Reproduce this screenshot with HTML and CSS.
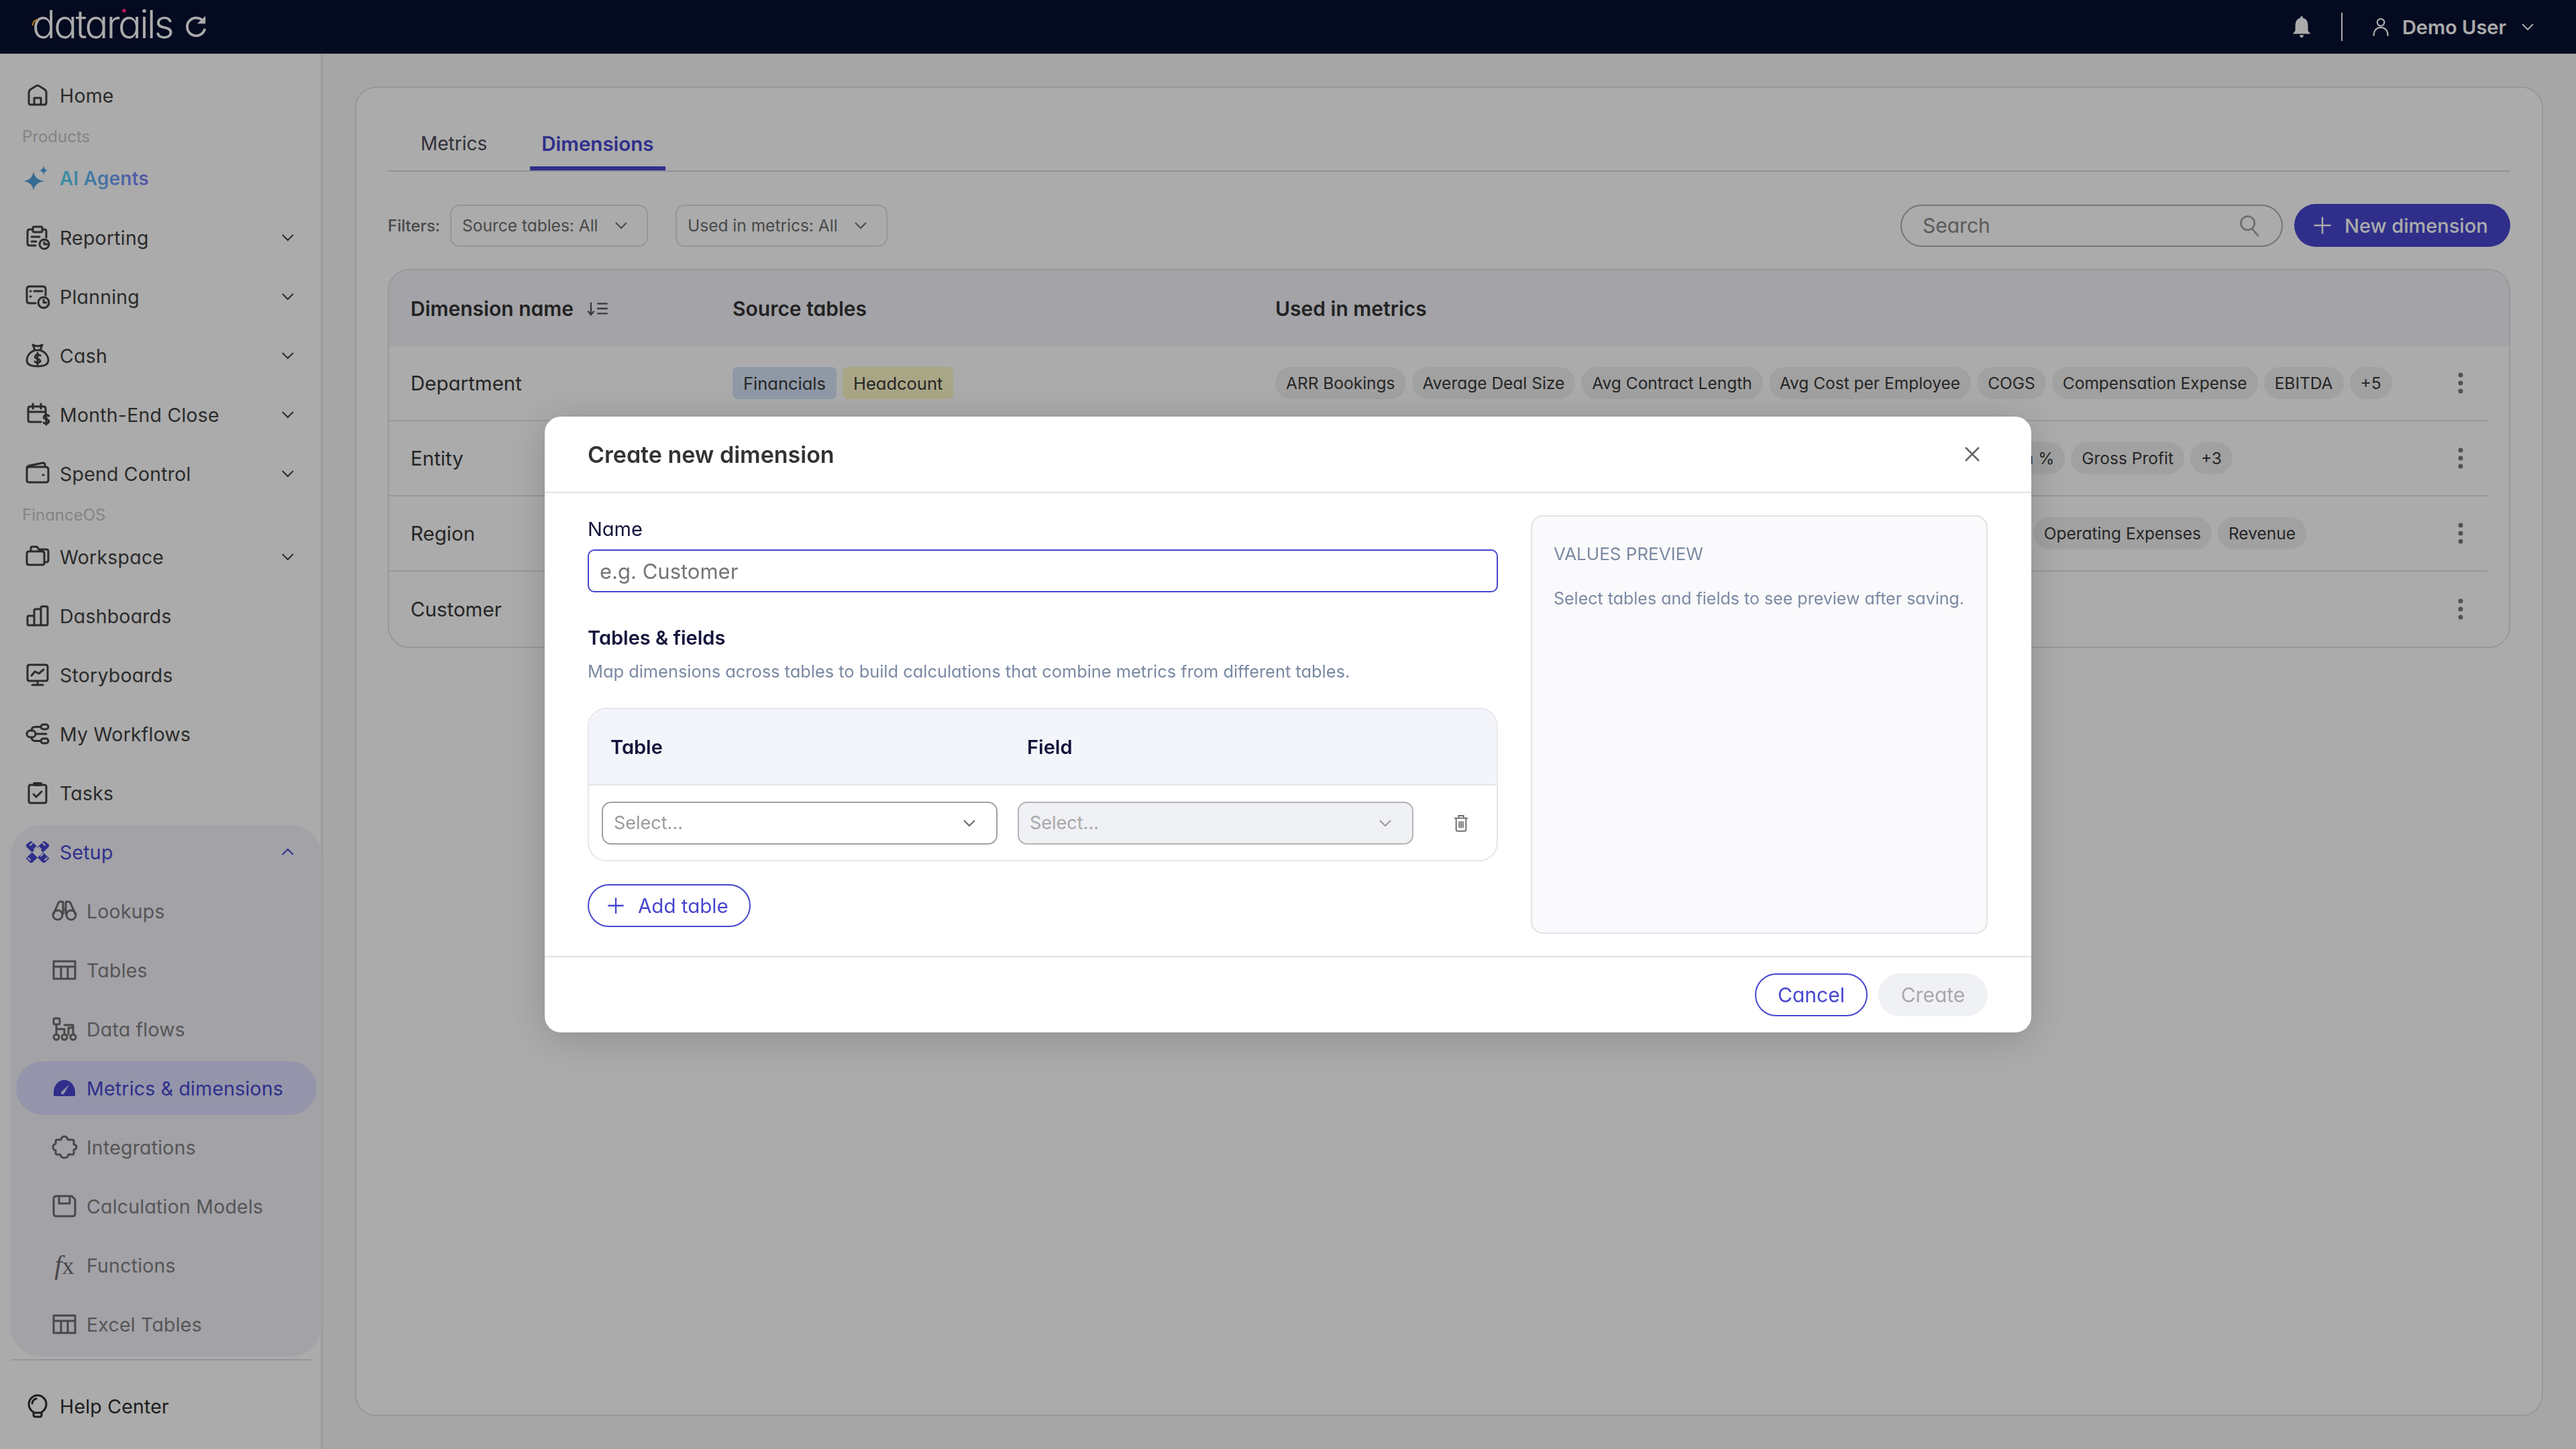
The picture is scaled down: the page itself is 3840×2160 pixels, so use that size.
FILE: index.html
```html
<!DOCTYPE html>
<html>
    <head>

        <title>Metrics &amp; dimensions</title>

        <link rel="stylesheet" href="styles.css">

    </head>
    <body>

        <svg class="sprite" xmlns="http://www.w3.org/2000/svg">
            <symbol id="i-chevron" viewBox="0 0 24 24"><path d="M4 8l8 8 8-8"/></symbol>
            <symbol id="i-plus" viewBox="0 0 24 24"><path d="M12 2v20M2 12h20"/></symbol>
            <symbol id="i-home" viewBox="0 0 40 40"><path d="M7 16Q7 13 10 11L18 6Q20 5 22 6L30 11Q33 13 33 16V31Q33 34 30 34H10Q7 34 7 31ZM15 34V24H25V34"/></symbol>
            <symbol id="i-reporting" viewBox="0 0 40 40"><path d="M13 8H8Q5 8 5 11V29Q5 32 8 32H17M27 8H30Q33 8 33 11V20M13 6Q13 4 15 4H25Q27 4 27 6V10Q27 12 25 12H15Q13 12 13 10ZM11 19H23M11 26H18"/><circle cx="30" cy="30" r="7"/><path d="M30 27V30H34"/></symbol>
            <symbol id="i-planning" viewBox="0 0 40 40"><path d="M17 30H8Q4 30 4 26V9Q4 5 8 5H28Q32 5 32 9V18M9 12H10M15 12H27M9 20H10"/><circle cx="29" cy="29" r="8"/><path d="M29 25V29H33"/></symbol>
            <symbol id="i-cash" viewBox="0 0 40 40"><path d="M13 4Q20 8 27 4L24 12H16ZM16 12C8 15 4 21 4 27C4 33 9 36 20 36S36 33 36 27C36 21 32 15 24 12M24 20Q20 17 17 20T20 25T23 30Q19 32 16 29M20 16V34"/></symbol>
            <symbol id="i-calendar" viewBox="0 0 40 40"><path d="M25 31H9Q6 31 6 28V11Q6 8 9 8H29Q32 8 32 11V19M6 16H32M13 4V11M25 4V11M37 22Q33 19 30 22T33 27T36 32Q32 35 29 32M33 19V35"/></symbol>
            <symbol id="i-wallet" viewBox="0 0 40 40"><path d="M4 12Q4 9 8 8L28 4Q31 4 31 7V10M4 14Q4 10 8 10H32Q36 10 36 14V30Q36 33 32 33H8Q4 33 4 30ZM28 22H29"/></symbol>
            <symbol id="i-folder" viewBox="0 0 40 40"><path d="M10 10V7Q10 5 12 5H19L22 9H33Q36 9 36 12V25Q36 28 33 28H31M4 15Q4 12 7 12H27Q30 12 30 15V29Q30 32 27 32H7Q4 32 4 29Z"/></symbol>
            <symbol id="i-bars" viewBox="0 0 40 40"><path d="M5 22Q5 20 7 20H15V34H7Q5 34 5 32ZM15 12Q15 10 17 10H25V34H15ZM25 8Q25 6 27 6H33Q35 6 35 8V32Q35 34 33 34H25Z"/></symbol>
            <symbol id="i-monitor" viewBox="0 0 40 40"><path d="M5 8Q5 5 8 5H32Q35 5 35 8V26Q35 29 32 29H8Q5 29 5 26ZM20 29V35M12 35H28M11 21L16 15L22 18L29 12"/></symbol>
            <symbol id="i-workflow" viewBox="0 0 40 40"><rect x="25" y="6" width="11" height="7" rx="3.5"/><rect x="25" y="27" width="11" height="7" rx="3.5"/><rect x="4" y="15" width="13" height="10" rx="5"/><path d="M25 9.500H17Q11 9.500 11 15M25 30.500H17Q11 30.500 11 25M17 20H33"/></symbol>
            <symbol id="i-tasks" viewBox="0 0 40 40"><path d="M13 8H10Q7 8 7 11V32Q7 35 10 35H30Q33 35 33 32V11Q33 8 30 8H27M14 22L18 26L26 18"/><rect x="13" y="4" width="14" height="6" rx="2" class="solid"/></symbol>
            <symbol id="i-setup" viewBox="0 0 40 40"><path class="solid" d="M3 9L8 5Q10 3 12 5L36 28Q38 30 36 31L32 35Q30 37 28 36L6 15Q2 12 3 9ZM37 9L32 5Q30 3 28 5L4 28Q2 30 4 31L8 35Q10 37 12 36L34 15Q38 12 37 9Z"/><path class="cut" d="M9 10L12 7M15 16L18 13M25 26L28 23M31 32L34 29M31 10L28 7M9 32L6 29M25 16L22 13"/></symbol>
            <symbol id="i-binoculars" viewBox="0 0 40 40"><circle cx="10" cy="26" r="7"/><circle cx="30" cy="26" r="7"/><path d="M4 24L11 8Q12 6 14 6H16Q18 6 18 8V24M36 24L29 8Q28 6 26 6H24Q22 6 22 8V24M18 18H22"/></symbol>
            <symbol id="i-table" viewBox="0 0 40 40"><path d="M4 7H36V33H4ZM4 15H36M15 15V33M25 15V33"/></symbol>
            <symbol id="i-dataflow" viewBox="0 0 40 40"><rect x="4" y="4" width="9" height="9" rx="2"/><circle cx="8" cy="32" r="4"/><circle cx="20" cy="32" r="4"/><circle cx="33" cy="32" r="4"/><path d="M8 13V28M8 20H20V28M20 14H33V18H26V28M33 18V28"/></symbol>
            <symbol id="i-gauge" viewBox="0 0 40 40"><path class="solid" fill-rule="evenodd" d="M4 32V26C4 16 11 8 20 8S36 16 36 26V32H4ZM15 26L27 15L19 29Q17 30 15 28Z"/></symbol>
            <symbol id="i-puzzle" viewBox="0 0 40 40"><path d="M15 9Q16 4 20 4T25 9H32Q34 9 34 11V16Q38 17 38 20T34 24V29Q34 31 32 31H26Q25 36 20 36T14 31H9Q7 31 7 29V25Q3 24 3 20T7 15V11Q7 9 9 9Z"/></symbol>
            <symbol id="i-save" viewBox="0 0 40 40"><path d="M4 9Q4 5 8 5H31L36 10V31Q36 35 32 35H8Q4 35 4 31ZM12 5V16H28V5"/></symbol>
            <symbol id="i-bulb" viewBox="0 0 40 40"><path d="M14 29C9 26 7 21 7 17C7 10 13 4 20 4S33 10 33 17C33 21 31 26 26 29V33Q26 36 23 36H17Q14 36 14 33ZM14 30H26M12 16Q13 10 18 9"/></symbol>
            <symbol id="i-user" viewBox="0 0 40 40"><circle cx="20" cy="11" r="7"/><path d="M6 37C6 27 12 21 20 21S34 27 34 37"/></symbol>
            <symbol id="i-search" viewBox="0 0 40 40"><circle cx="16" cy="16" r="12"/><path d="M24 26L34 38"/></symbol>
        </svg>

        <!-- Top bar -->
        <header class="topbar">
            <div class="logo">
                <span class="logo-text">datarails</span>
                <svg class="logo-arc" viewBox="0 0 20 20"><path d="M2 16Q3 5 13 3"/></svg>
                <span class="logo-dot"></span>
            </div>
            <svg class="refresh" viewBox="0 0 40 40"><path d="M33 14A14 14 0 1 0 34 23"/><path class="solid" d="M22 15H35V3Z"/></svg>

            <div class="topbar-right">
                <svg class="bell" viewBox="0 0 28 36"><path d="M14 1Q16 1 16 4Q24 6 24 15V24L28 29H0L4 24V15Q4 6 12 4Q12 1 14 1ZM11 31H17Q17 35 14 35T11 31Z"/></svg>
                <span class="topbar-sep"></span>
                <svg class="icon user-icon"><use href="#i-user"/></svg>
                <span class="user-name">Demo User</span>
                <svg class="chevron"><use href="#i-chevron"/></svg>
            </div>
        </header>

        <div class="layout">

            <!-- Sidebar -->
            <nav class="sidebar">
                <a class="nav-item"><svg class="icon"><use href="#i-home"/></svg>Home</a>
                <div class="nav-label">Products</div>
                <a class="nav-item ai">
                    <svg class="icon" viewBox="0 0 40 40"><path class="ai-star" d="M14 10Q16 22 30 24Q16 26 14 38Q12 26 0 24Q12 22 14 10ZM29 1Q30 7 35 8Q30 9 29 15Q28 9 23 8Q28 7 29 1Z"/></svg>
                    <span class="ai-text">AI Agents</span>
                </a>
                <a class="nav-item"><svg class="icon"><use href="#i-reporting"/></svg>Reporting<svg class="chevron"><use href="#i-chevron"/></svg></a>
                <a class="nav-item"><svg class="icon"><use href="#i-planning"/></svg>Planning<svg class="chevron"><use href="#i-chevron"/></svg></a>
                <a class="nav-item"><svg class="icon"><use href="#i-cash"/></svg>Cash<svg class="chevron"><use href="#i-chevron"/></svg></a>
                <a class="nav-item"><svg class="icon"><use href="#i-calendar"/></svg>Month-End Close<svg class="chevron"><use href="#i-chevron"/></svg></a>
                <a class="nav-item"><svg class="icon"><use href="#i-wallet"/></svg>Spend Control<svg class="chevron"><use href="#i-chevron"/></svg></a>
                <div class="nav-label">FinanceOS</div>
                <a class="nav-item"><svg class="icon"><use href="#i-folder"/></svg>Workspace<svg class="chevron"><use href="#i-chevron"/></svg></a>
                <a class="nav-item"><svg class="icon"><use href="#i-bars"/></svg>Dashboards</a>
                <a class="nav-item"><svg class="icon"><use href="#i-monitor"/></svg>Storyboards</a>
                <a class="nav-item"><svg class="icon"><use href="#i-workflow"/></svg>My Workflows</a>
                <a class="nav-item"><svg class="icon"><use href="#i-tasks"/></svg>Tasks</a>

                <div class="nav-group">
                    <a class="nav-item open"><svg class="icon"><use href="#i-setup"/></svg>Setup<svg class="chevron up"><use href="#i-chevron"/></svg></a>
                    <a class="nav-item sub"><svg class="icon"><use href="#i-binoculars"/></svg>Lookups</a>
                    <a class="nav-item sub"><svg class="icon"><use href="#i-table"/></svg>Tables</a>
                    <a class="nav-item sub"><svg class="icon"><use href="#i-dataflow"/></svg>Data flows</a>
                    <a class="nav-item sub active"><svg class="icon"><use href="#i-gauge"/></svg>Metrics &amp; dimensions</a>
                    <a class="nav-item sub"><svg class="icon"><use href="#i-puzzle"/></svg>Integrations</a>
                    <a class="nav-item sub"><svg class="icon"><use href="#i-save"/></svg>Calculation Models</a>
                    <a class="nav-item sub"><span class="fx-icon"><i>f</i>x</span>Functions</a>
                    <a class="nav-item sub"><svg class="icon"><use href="#i-table"/></svg>Excel Tables</a>
                </div>

                <div class="nav-divider"></div>
                <a class="nav-item help"><svg class="icon"><use href="#i-bulb"/></svg>Help Center</a>
            </nav>

            <!-- Page -->
            <main class="main">
                <section class="card">

                    <div class="tabs">
                        <div class="tab">Metrics</div>
                        <div class="tab active">Dimensions</div>
                    </div>

                    <div class="toolbar">
                        <span class="filters-label">Filters:</span>
                        <div class="filter first">Source tables: All<svg class="chevron"><use href="#i-chevron"/></svg></div>
                        <div class="filter second">Used in metrics: All<svg class="chevron"><use href="#i-chevron"/></svg></div>
                        <div class="search">Search<svg class="icon"><use href="#i-search"/></svg></div>
                        <div class="btn-new"><svg class="plus"><use href="#i-plus"/></svg>New dimension</div>
                    </div>

                    <div class="table">
                        <div class="table-head">
                            <div class="col-name">Dimension name
                                <svg class="sort" viewBox="0 0 34 24"><path d="M6 2V21M1 16L6 22L11 16M16 4H33M16 12H33M16 20H33"/></svg>
                            </div>
                            <div>Source tables</div>
                            <div>Used in metrics</div>
                        </div>

                        <div class="table-row">
                            <div class="col-name">Department</div>
                            <div class="tags">
                                <span class="tag source blue">Financials</span>
                                <span class="tag source yellow">Headcount</span>
                            </div>
                            <div class="tags">
                                <span class="tag">ARR Bookings</span>
                                <span class="tag">Average Deal Size</span>
                                <span class="tag">Avg Contract Length</span>
                                <span class="tag">Avg Cost per Employee</span>
                                <span class="tag">COGS</span>
                                <span class="tag">Compensation Expense</span>
                                <span class="tag">EBITDA</span>
                                <span class="tag">+5</span>
                            </div>
                            <svg class="kebab" viewBox="0 0 8 32"><circle cx="4" cy="4" r="3.500"/><circle cx="4" cy="16" r="3.500"/><circle cx="4" cy="28" r="3.500"/></svg>
                        </div>

                        <div class="table-row">
                            <div class="col-name">Entity</div>
                            <div class="tags"></div>
                            <div class="tags entity-tags">
                                <span class="tag">Gross Margin %</span>
                                <span class="tag">Gross Profit</span>
                                <span class="tag">+3</span>
                            </div>
                            <svg class="kebab" viewBox="0 0 8 32"><circle cx="4" cy="4" r="3.500"/><circle cx="4" cy="16" r="3.500"/><circle cx="4" cy="28" r="3.500"/></svg>
                        </div>

                        <div class="table-row">
                            <div class="col-name">Region</div>
                            <div class="tags"></div>
                            <div class="tags region-tags">
                                <span class="tag">Operating Expenses</span>
                                <span class="tag">Revenue</span>
                            </div>
                            <svg class="kebab" viewBox="0 0 8 32"><circle cx="4" cy="4" r="3.500"/><circle cx="4" cy="16" r="3.500"/><circle cx="4" cy="28" r="3.500"/></svg>
                        </div>

                        <div class="table-row">
                            <div class="col-name">Customer</div>
                            <div class="tags"></div>
                            <div class="tags"></div>
                            <svg class="kebab" viewBox="0 0 8 32"><circle cx="4" cy="4" r="3.500"/><circle cx="4" cy="16" r="3.500"/><circle cx="4" cy="28" r="3.500"/></svg>
                        </div>
                    </div>

                </section>
            </main>

        </div>

        <!-- Modal -->
        <div class="overlay">
            <div class="modal">

                <div class="modal-header">
                    <h2 class="modal-title">Create new dimension</h2>
                    <svg class="close" viewBox="0 0 24 24"><path d="M2 2L22 22M22 2L2 22"/></svg>
                </div>

                <div class="modal-body">
                    <div class="form">
                        <label class="field-label">Name</label>
                        <div class="text-input">e.g. Customer</div>

                        <h3 class="form-heading">Tables &amp; fields</h3>
                        <p class="form-desc">Map dimensions across tables to build calculations that combine metrics from different tables.</p>

                        <div class="mapping">
                            <div class="mapping-head">
                                <span class="mapping-table">Table</span>
                                <span>Field</span>
                            </div>
                            <div class="mapping-row">
                                <div class="select">Select...<svg class="chevron"><use href="#i-chevron"/></svg></div>
                                <div class="select disabled">Select...<svg class="chevron"><use href="#i-chevron"/></svg></div>
                                <svg class="trash" viewBox="0 0 24 28"><path d="M1 6H23M8 6V2H16V6M4 6V25Q4 27 6 27H18Q20 27 20 25V6M9 11V22M12 11V22M15 11V22"/></svg>
                            </div>
                        </div>

                        <div class="btn-add"><svg class="plus"><use href="#i-plus"/></svg>Add table</div>
                    </div>

                    <aside class="preview">
                        <div class="preview-title">VALUES PREVIEW</div>
                        <p class="preview-text">Select tables and fields to see preview after saving.</p>
                    </aside>
                </div>

                <div class="modal-footer">
                    <div class="btn-cancel">Cancel</div>
                    <div class="btn-create">Create</div>
                </div>

            </div>
        </div>

    </body>
</html>
```

FILE: styles.css
```css
/** Page **/
* {
    box-sizing: border-box;
}
html, body {
    margin: 0;
    height: 100%;
    overflow: hidden;
}
body {
    display: flex;
    flex-direction: column;
    font-family: "Inter", "Liberation Sans", sans-serif;
    font-feature-settings: "cv11";
    background-color: #f8f8f8;
    color: #383838;
}
.sprite {
    display: none;
}

/** Shared icons **/
.icon {
    flex: none;
    width: 40px;
    height: 40px;
    fill: none;
    stroke: currentColor;
    stroke-width: 3;
    stroke-linecap: round;
    stroke-linejoin: round;
}
.solid {
    fill: currentColor;
    stroke: none;
}
.cut {
    stroke: #f3f2fa;
    stroke-width: 2;
}
.chevron {
    flex: none;
    width: 24px;
    height: 24px;
    fill: none;
    stroke: currentColor;
    stroke-width: 2;
}
.chevron.up {
    transform: rotate(180deg);
}
.plus {
    flex: none;
    width: 28px;
    height: 28px;
    fill: none;
    stroke: currentColor;
    stroke-width: 2;
}

/** Top bar **/
.topbar {
    display: flex;
    flex: none;
    align-items: center;
    height: 80px;
    padding: 0 60px 0 48px;
    background-color: #061030;
    color: #fff;
}
.logo {
    position: relative;
    width: 200px;
    height: 80px;
    line-height: 72px;
}
.logo-text {
    font-family: "Inter", sans-serif;
    font-size: 58px;
    font-weight: 300;
    letter-spacing: -2.700px;
    color: #fff;
}
.logo-arc {
    position: absolute;
    left: -1px;
    top: 27px;
    width: 14px;
    height: 14px;
    fill: none;
    stroke: #ffb020;
    stroke-width: 3;
}
.logo-dot {
    position: absolute;
    left: 134px;
    top: 13px;
    width: 6px;
    height: 6px;
    border-radius: 100%;
    background-color: #ff2080;
}
.refresh {
    width: 38px;
    height: 38px;
    margin-left: 25px;
    fill: none;
    stroke: currentColor;
    stroke-width: 4;
}
.topbar-right {
    display: flex;
    align-items: center;
    margin-left: auto;
}
.bell {
    width: 28px;
    height: 34px;
    fill: currentColor;
}
.topbar-sep {
    width: 2px;
    height: 42px;
    margin: 0 42px 0 45px;
    background-color: #fff;
}
.user-icon {
    width: 30px;
    height: 34px;
    stroke-width: 3;
}
.user-name {
    margin: 0 20px 0 17px;
    font-size: 29px;
    font-weight: 600;
}

/** Layout **/
.layout {
    display: flex;
    flex: 1;
    min-height: 0;
}

/** Sidebar **/
.sidebar {
    display: flex;
    flex: none;
    flex-direction: column;
    gap: 8px;
    width: 482px;
    padding: 22px 0 0 16px;
    border-right: 4px solid #ececec;
    background-color: #fff;
}
.nav-item {
    display: flex;
    flex: none;
    align-items: center;
    gap: 13px;
    height: 80px;
    margin: 0 6px 0 8px;
    padding: 0 31px 0 12px;
    border-radius: 40px;
    font-size: 28.500px;
    letter-spacing: 0.2px;
    color: #414141;
}
.nav-item .chevron {
    margin-left: auto;
}
.nav-label {
    flex: none;
    height: 28px;
    padding-left: 17px;
    font-size: 24px;
    line-height: 28px;
    color: #c5c5c5;
}
.ai {
    font-size: 28px;
    font-weight: 600;
}
.ai-star {
    fill: #4fa0dc;
    stroke: none;
}
.ai-text {
    background: linear-gradient(90deg, #55d8f0, #7d7dff);
    -webkit-background-clip: text;
    background-clip: text;
    color: transparent;
}
.nav-group {
    display: flex;
    flex: none;
    flex-direction: column;
    gap: 8px;
    padding-bottom: 8px;
    border-radius: 44px;
    background-color: #f3f2fa;
}
.nav-item.open {
    color: #4646cf;
}
.nav-item.sub {
    padding-left: 52px;
    color: #808080;
}
.nav-item.sub .icon, .fx-icon {
    color: #6c6c6c;
}
.nav-item.sub.active {
    background-color: #dddefe;
    color: #4646cf;
}
.nav-item.sub.active .icon {
    color: #4646cf;
}
.fx-icon {
    flex: none;
    width: 40px;
    font-family: "Liberation Serif", serif;
    font-size: 36px;
    line-height: 40px;
    text-align: center;
}
.fx-icon i {
    font-size: 40px;
}
.nav-divider {
    flex: none;
    height: 2px;
    margin: -4px 14px 20px 0;
    background-color: #e0e0e0;
}
.nav-item.help {
    color: #2c2c2c;
}

/** Main **/
.main {
    display: flex;
    flex: 1;
    min-width: 0;
    padding: 49px;
    padding-left: 47px;
}
.card {
    flex: 1;
    padding: 49px 47px 0;
    border: 2px solid #e3e3e3;
    border-radius: 32px;
    background-color: #fff;
}

/** Tabs **/
.tabs {
    display: flex;
    gap: 47px;
    height: 76px;
    padding-left: 32px;
    border-bottom: 2px solid #d5dae2;
}
.tab {
    display: flex;
    align-items: center;
    height: 74px;
    padding: 0 17px 6px;
    font-size: 28px;
    color: #4a4a55;
}
.tab.active {
    border-bottom: 6px solid #4646cf;
    padding-bottom: 0;
    font-size: 29.500px;
    font-weight: 600;
    color: #4646cf;
}

/** Toolbar **/
.toolbar {
    display: flex;
    align-items: center;
    height: 64px;
    margin-top: 48px;
    font-size: 24.500px;
}
.filters-label {
    width: 93px;
    font-size: 24px;
    font-weight: 500;
    color: #6e6e6e;
}
.filter {
    display: flex;
    align-items: center;
    height: 63px;
    padding: 0 26px 0 16px;
    border: 2px solid #e0e0e0;
    border-radius: 14px;
    color: #6e6e6e;
}
.filter .chevron {
    margin-left: auto;
}
.filter.first {
    width: 295px;
}
.filter.second {
    width: 316px;
    margin-left: 41px;
}
.search {
    display: flex;
    align-items: center;
    justify-content: space-between;
    width: 570px;
    height: 63px;
    margin-left: auto;
    padding: 0 30px 0 31px;
    border: 2px solid #b0b0b6;
    border-radius: 32px;
    font-size: 30px;
    color: #868686;
}
.search .icon {
    width: 34px;
    height: 38px;
    color: #a0a0a0;
}
.btn-new {
    display: flex;
    align-items: center;
    gap: 18px;
    width: 322px;
    height: 64px;
    margin-left: 17px;
    padding-left: 27px;
    border-radius: 32px;
    background-color: #4646cf;
    font-size: 29px;
    font-weight: 500;
    color: #fff;
}
.btn-new .plus {
    width: 30px;
    height: 30px;
}

/** Table **/
.table {
    margin-top: 33px;
    border: 2px solid #e3e3e3;
    border-radius: 32px;
    overflow: hidden;
}
.table-head, .table-row {
    display: grid;
    grid-template-columns: 512px 809px 1fr 80px;
    align-items: center;
}
.table-head {
    height: 113px;
    background-color: #f4f3fb;
    font-size: 30px;
    font-weight: 600;
    color: #333;
}
.table-row {
    height: 112px;
    margin-right: 32px;
    border-bottom: 2px solid #e3e3e3;
    font-size: 29.500px;
}
.table-row:last-child {
    border-bottom: 0;
}
.col-name {
    display: flex;
    align-items: center;
    padding-left: 32px;
}
.sort {
    width: 32px;
    height: 22px;
    margin-left: 20px;
    fill: none;
    stroke: #555;
    stroke-width: 2.500;
}
.tags {
    display: flex;
    gap: 9px;
}
.tag {
    display: flex;
    align-items: center;
    height: 48px;
    padding: 0 16px;
    border-radius: 24px;
    background-color: #f0f0f0;
    font-size: 24.500px;
    white-space: nowrap;
}
.tag.source {
    border-radius: 8px;
    font-size: 25.500px;
}
.tag.blue {
    background-color: #d6e4f8;
}
.tag.yellow {
    background-color: #fcf8c8;
}
.entity-tags {
    justify-content: flex-end;
    padding-right: 300px;
}
.region-tags {
    justify-content: flex-end;
    padding-right: 190px;
}
.kebab {
    justify-self: center;
    width: 8px;
    height: 32px;
    fill: #7a7a7a;
}

/** Modal **/
.overlay {
    position: fixed;
    top: 0;
    left: 0;
    right: 0;
    bottom: 0;
    display: flex;
    align-items: center;
    justify-content: center;
    background-color: rgba(0, 0, 0, 0.33);
}
.modal {
    display: flex;
    flex-direction: column;
    width: 2216px;
    border-radius: 24px;
    background-color: #fff;
    box-shadow: 0 8px 60px rgba(0, 0, 0, 0.18);
}
.modal-header {
    display: flex;
    align-items: center;
    justify-content: space-between;
    height: 114px;
    padding: 0 76px 0 64px;
    border-bottom: 2px solid #e0e0e6;
}
.modal-title {
    margin: 0;
    font-size: 34px;
    font-weight: 600;
    color: #333;
}
.close {
    width: 24px;
    height: 24px;
    fill: none;
    stroke: #666;
    stroke-width: 2.500;
}
.modal-body {
    display: flex;
    gap: 49px;
    padding: 33px 65px 33px 64px;
}
.form {
    width: 1357px;
    padding-bottom: 10px;
}
.field-label {
    display: block;
    height: 42px;
    margin-bottom: 9px;
    font-size: 29px;
    line-height: 42px;
    color: #14143c;
}
.text-input {
    display: flex;
    align-items: center;
    height: 64px;
    padding: 0 16px;
    border: 2px solid #4646cf;
    border-radius: 10px;
    font-size: 31px;
    color: #757575;
}
.form-heading {
    margin: 46px 0 8px;
    font-size: 29px;
    font-weight: 600;
    line-height: 44px;
    color: #14143c;
}
.form-desc {
    margin: 0 0 34px;
    font-size: 25.400px;
    line-height: 40px;
    color: #7a89a3;
}

/** Mapping table **/
.mapping {
    border: 2px solid #e6e6ec;
    border-radius: 28px;
    overflow: hidden;
}
.mapping-head {
    display: flex;
    align-items: center;
    height: 114px;
    padding-left: 32px;
    border-bottom: 2px solid #e6e6ec;
    background-color: #f4f5fa;
    font-size: 29px;
    font-weight: 600;
    color: #14143c;
}
.mapping-table {
    width: 621px;
}
.mapping-row {
    display: flex;
    align-items: center;
    gap: 30px;
    height: 111px;
    padding-left: 19px;
}
.select {
    display: flex;
    align-items: center;
    justify-content: space-between;
    width: 590px;
    height: 64px;
    padding: 0 28px 0 16px;
    border: 2px solid #a0a0a8;
    border-radius: 14px;
    font-size: 27px;
    color: #9a9a9a;
}
.select .chevron {
    color: #666;
}
.select.disabled {
    border-color: #b4b4b4;
    background-color: #f0f1f5;
    color: #a8a8a8;
}
.select.disabled .chevron {
    color: #999;
}
.trash {
    width: 22px;
    height: 26px;
    margin-left: 30px;
    fill: none;
    stroke: #666;
    stroke-width: 2;
}
.btn-add {
    display: flex;
    align-items: center;
    gap: 19px;
    width: 243px;
    height: 64px;
    margin-top: 34px;
    padding-left: 26px;
    border: 2px solid #4646cf;
    border-radius: 32px;
    font-size: 29.500px;
    color: #4646cf;
}

/** Preview **/
.preview {
    flex: 1;
    padding: 36px 32px;
    border: 2px solid #e2e2e8;
    border-radius: 18px;
    background-color: #fafafc;
}
.preview-title {
    font-size: 26px;
    line-height: 40px;
    color: #7c8aa3;
}
.preview-text {
    margin: 26px 0 0;
    font-size: 25px;
    line-height: 40px;
    color: #7c8aa3;
}

/** Modal footer **/
.modal-footer {
    display: flex;
    align-items: center;
    justify-content: flex-end;
    gap: 16px;
    height: 114px;
    padding-right: 65px;
    border-top: 2px solid #e0e0e6;
}
.btn-cancel, .btn-create {
    display: flex;
    align-items: center;
    justify-content: center;
    height: 64px;
    border-radius: 32px;
    font-size: 30px;
}
.btn-cancel {
    width: 168px;
    border: 2px solid #4646cf;
    color: #4646cf;
}
.btn-create {
    width: 163px;
    background-color: #f0f1f5;
    color: #a8a8a8;
}
```
